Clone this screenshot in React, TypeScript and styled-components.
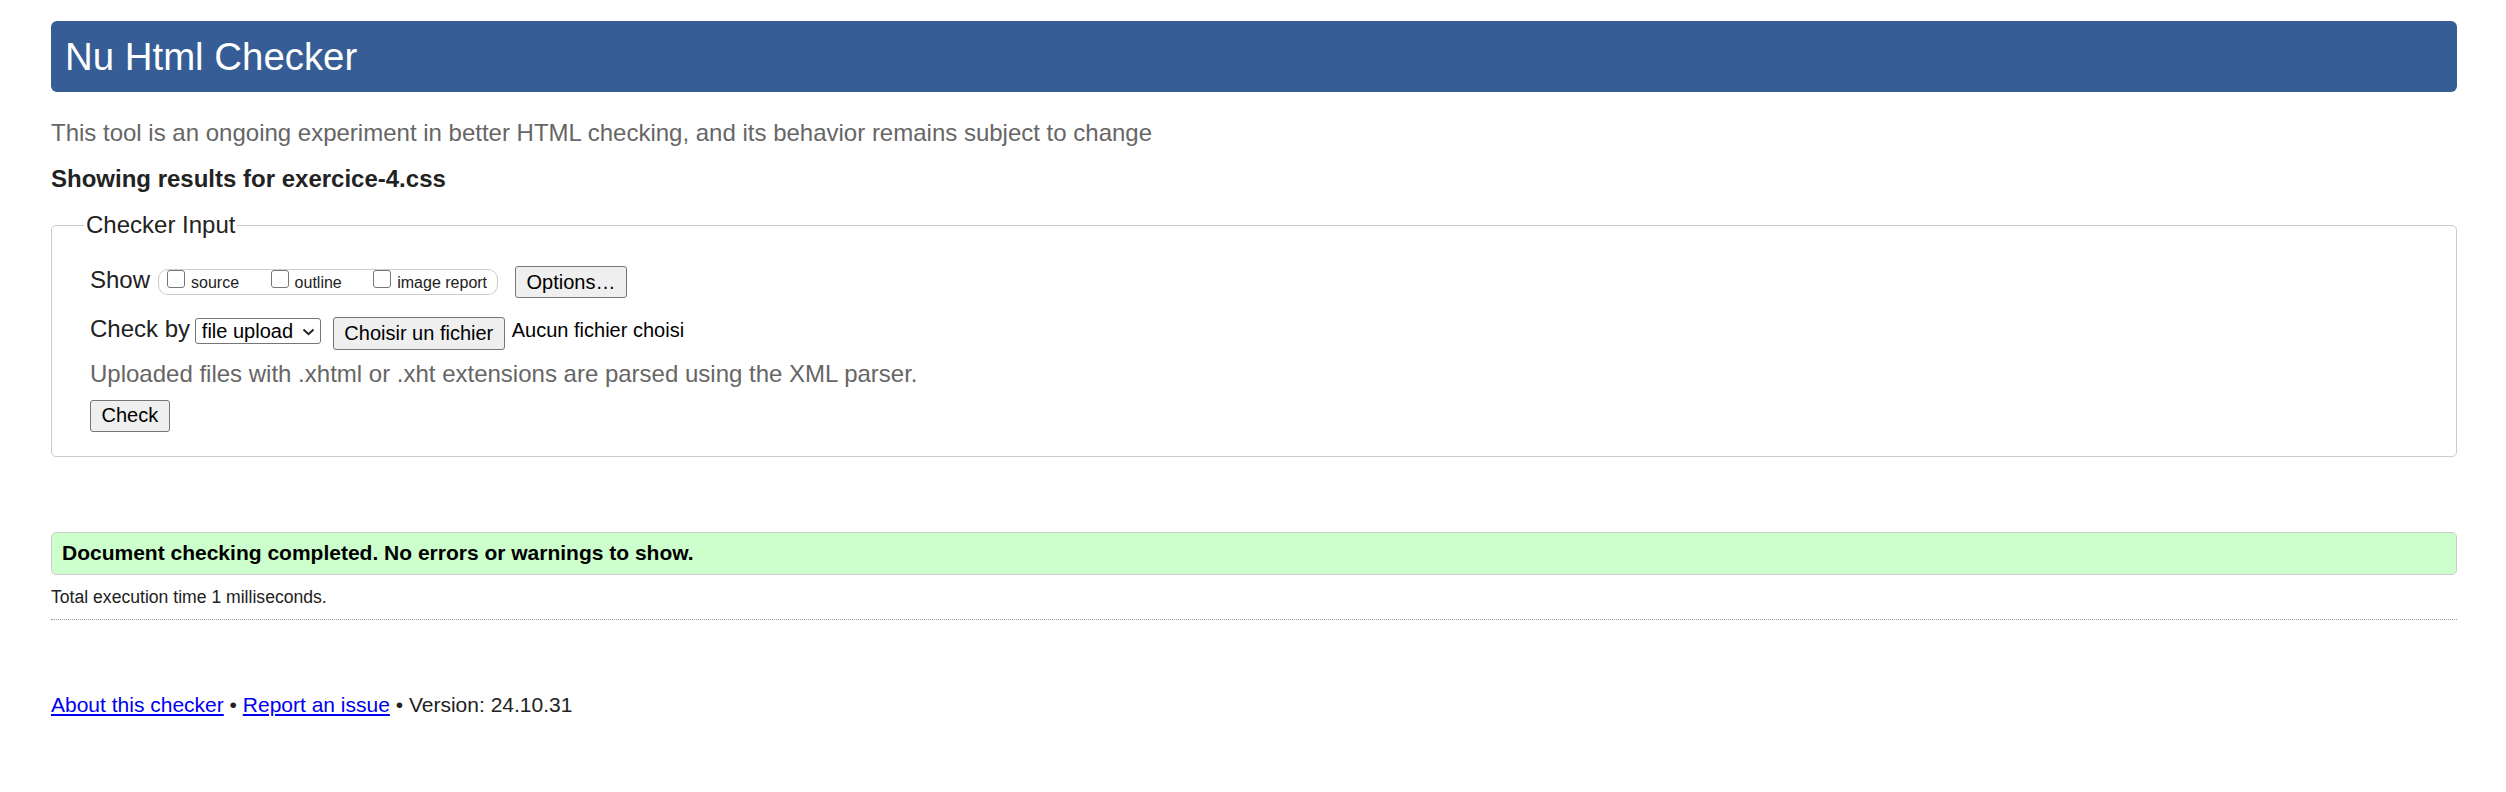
import React from "react";
import styled, { createGlobalStyle } from "styled-components";

const GlobalStyle = createGlobalStyle`
  html, body {
    margin: 0;
    padding: 0;
    background: #ffffff;
  }
  body {
    font-family: "Liberation Sans", Arial, Helvetica, sans-serif;
    color: #222222;
  }
  *, *::before, *::after {
    box-sizing: border-box;
  }
`;

const Page = styled.main`
  display: flex;
  flex-direction: column;
  padding: 21px 49px 60px 51px;
`;

const Banner = styled.h1`
  margin: 0;
  height: 71px;
  padding: 14px 14px;
  background: #365d95;
  color: #ffffff;
  border-radius: 6px;
  font-size: 38.4px;
  font-weight: normal;
  line-height: 44px;
`;

const Intro = styled.p`
  margin: 27px 0 0;
  font-size: 24px;
  line-height: 28px;
  color: #666666;
`;

const ResultsFor = styled.h2`
  margin: 17.5px 0 0;
  font-size: 24px;
  line-height: 28px;
  font-weight: bold;
  color: #222222;
`;

const Fieldset = styled.fieldset`
  margin: 18.8px 0 0;
  padding: 27px 20px 24px 38px;
  border: 1px solid #cccccc;
  border-radius: 5px;
  min-width: 0;
`;

const Legend = styled.legend`
  margin-left: -6px;
  padding: 0 2px;
  font-size: 24px;
  line-height: 28px;
  color: #222222;
`;

const Row = styled.div<{ $top: number }>`
  display: flex;
  align-items: flex-start;
  margin-top: ${(p) => p.$top}px;
`;

const RowLabel = styled.span<{ $muted?: boolean }>`
  font-size: 24px;
  line-height: 28px;
  color: ${(p) => (p.$muted ? "#666666" : "#222222")};
  white-space: nowrap;
`;

const ToggleGroup = styled.div`
  display: flex;
  align-items: flex-start;
  gap: 31.5px;
  height: 26px;
  margin: 2.3px 0 0 8px;
  padding: 0 10px 0 8px;
  border: 1px solid #cccccc;
  border-radius: 10px;
`;

const Toggle = styled.label`
  display: flex;
  align-items: flex-start;
  gap: 6px;
  font-size: 16px;
  line-height: 18px;
  color: #222222;
  white-space: nowrap;
`;

const CheckBox = styled.input.attrs({ type: "checkbox" })`
  appearance: none;
  -webkit-appearance: none;
  margin: 0;
  width: 18px;
  height: 18px;
  border: 1px solid #767676;
  border-radius: 3px;
  background: #ffffff;
`;

const ToggleText = styled.span`
  padding-top: 4.5px;
`;

const Button = styled.button<{ $left?: number; $top?: number; $height?: number }>`
  margin: ${(p) => p.$top ?? 0}px 0 0 ${(p) => p.$left ?? 0}px;
  height: ${(p) => p.$height ?? 32}px;
  padding: 0 10.5px;
  font-family: "Liberation Sans", Arial, Helvetica, sans-serif;
  font-size: 20px;
  line-height: 23px;
  color: #000000;
  background: #efefef;
  border: 1px solid #767676;
  border-radius: 3px;
  white-space: nowrap;
`;

const SelectWrap = styled.span`
  position: relative;
  display: inline-flex;
  margin: 3.3px 0 0 4.8px;
`;

const Select = styled.select`
  appearance: none;
  -webkit-appearance: none;
  width: 126.4px;
  height: 25.4px;
  padding: 0 0 0 6px;
  font-family: "Liberation Sans", Arial, Helvetica, sans-serif;
  font-size: 20px;
  color: #000000;
  background: #ffffff;
  border: 1px solid #767676;
  border-radius: 3px;
`;

const Chevron = styled.svg`
  position: absolute;
  right: 6.7px;
  top: 9.4px;
  pointer-events: none;
`;

const FileStatus = styled.span`
  margin: 3.9px 0 0 7px;
  font-size: 20px;
  line-height: 23px;
  color: #000000;
  white-space: nowrap;
`;

const Success = styled.div`
  margin-top: 75px;
  padding: 8.5px 10px;
  border: 1px solid #cccccc;
  border-radius: 5px;
  background: #ccffcc;
  font-size: 21px;
  line-height: 24px;
  font-weight: bold;
  color: #000000;
`;

const Timing = styled.p`
  margin: 11.6px 0 0;
  font-size: 17.6px;
  line-height: 20px;
  color: #222222;
`;

const Rule = styled.hr`
  margin: 12.4px 0 0;
  height: 0;
  border: 0;
  border-top: 1px dotted #999999;
`;

const Footer = styled.p`
  margin: 73.4px 0 0;
  font-size: 21px;
  line-height: 24px;
  color: #222222;
`;

const Link = styled.a`
  color: #0000ee;
  text-decoration: underline;
`;

export default function App() {
  return (
    <>
      <GlobalStyle />
      <Page>
        <Banner>Nu Html Checker</Banner>
        <Intro>
          This tool is an ongoing experiment in better HTML checking, and its behavior remains subject to change
        </Intro>
        <ResultsFor>Showing results for exercice-4.css</ResultsFor>
        <Fieldset>
          <Legend>Checker Input</Legend>
          <Row $top={0}>
            <RowLabel>Show</RowLabel>
            <ToggleGroup>
              <Toggle>
                <CheckBox />
                <ToggleText>source</ToggleText>
              </Toggle>
              <Toggle>
                <CheckBox />
                <ToggleText>outline</ToggleText>
              </Toggle>
              <Toggle>
                <CheckBox />
                <ToggleText>image report</ToggleText>
              </Toggle>
            </ToggleGroup>
            <Button $left={17}>Options…</Button>
          </Row>
          <Row $top={16.7}>
            <RowLabel>Check by</RowLabel>
            <SelectWrap>
              <Select defaultValue="file">
                <option value="file">file upload</option>
                <option value="address">address</option>
                <option value="text">text input</option>
              </Select>
              <Chevron width="13" height="8" viewBox="0 0 13 8">
                <polyline points="1.5,1.5 6.5,6.2 11.5,1.5" fill="none" stroke="#222" strokeWidth="1.9" />
              </Chevron>
            </SelectWrap>
            <Button $left={11.6} $top={2} $height={33}>
              Choisir un fichier
            </Button>
            <FileStatus>Aucun fichier choisi</FileStatus>
          </Row>
          <Row $top={10}>
            <RowLabel $muted>Uploaded files with .xhtml or .xht extensions are parsed using the XML parser.</RowLabel>
          </Row>
          <Row $top={12}>
            <Button>Check</Button>
          </Row>
        </Fieldset>
        <Success>Document checking completed. No errors or warnings to show.</Success>
        <Timing>Total execution time 1 milliseconds.</Timing>
        <Rule />
        <Footer>
          <Link href="#about">About this checker</Link> • <Link href="#issue">Report an issue</Link> • Version: 24.10.31
        </Footer>
      </Page>
    </>
  );
}
